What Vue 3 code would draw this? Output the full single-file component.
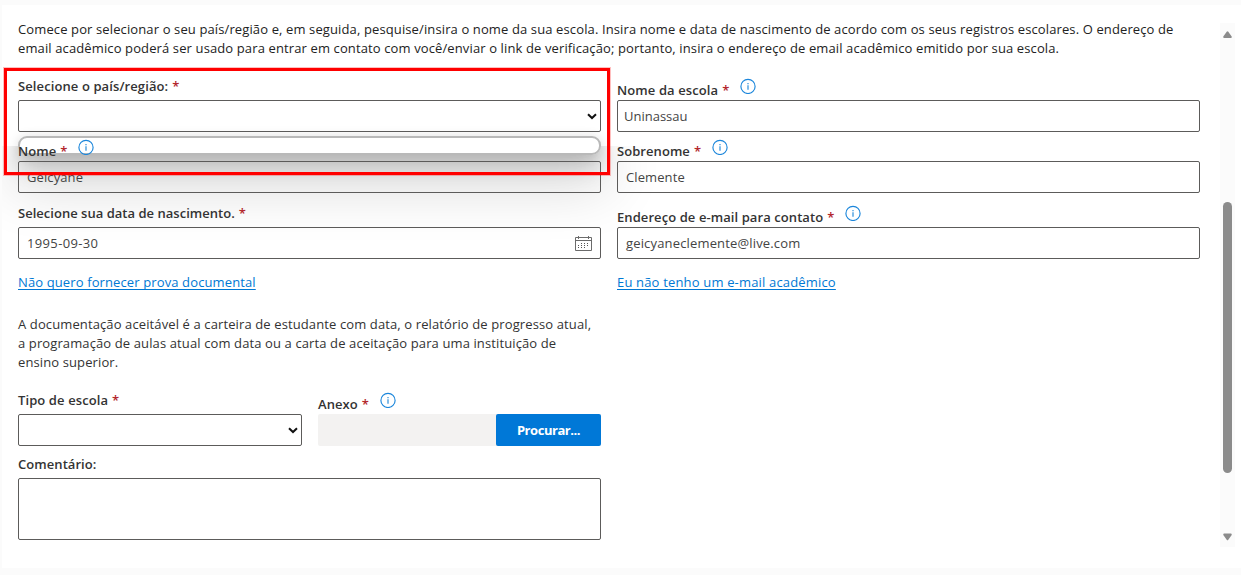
<script setup>
import { h } from 'vue'

const InfoIcon = () =>
  h('svg', { class: 'info', width: 16, height: 16, viewBox: '0 0 16 16' }, [
    h('circle', { cx: 8, cy: 8.4, r: 7.1, fill: 'none', stroke: '#1b86db', 'stroke-width': 1.15 }),
    h('path', { d: 'M7.5 5h1v1.2h-1zM7.5 7.2h1v4.600h-1z', fill: '#0078d4' }),
  ])

const Chevron = () =>
  h('svg', { width: 10, height: 7, viewBox: '0 0 10 7' }, [
    h('path', { d: 'M1 1.2l4 3.8 4-3.8', fill: 'none', stroke: '#111', 'stroke-width': 2 }),
  ])
</script>

<template>
  <div class="page">
    <main class="card">
      <div class="content">
        <p class="intro">
          <span class="i1">Comece por selecionar o seu país/região e, em seguida, pesquise/insira o nome da sua escola. Insira nome e data de nascimento de acordo com os seus registros escolares. O endereço de</span><br>
          <span class="i2">email acadêmico poderá ser usado para entrar em contato com você/enviar o link de verificação; portanto, insira o endereço de email acadêmico emitido por sua escola.</span>
        </p>

        <div class="row first">
          <div class="field country">
            <div class="label plain"><span class="t1">Selecione o país/região:</span><b>*</b></div>
            <div class="box select"><Chevron /></div>
            <div class="popup"></div>
            <div class="shade"><i></i></div>
            <div class="mark"></div>
          </div>
          <div class="field">
            <div class="label"><span class="t2">Nome da escola</span><b>*</b><InfoIcon /></div>
            <div class="box near"><span class="v1">Uninassau</span></div>
          </div>
        </div>

        <div class="row second">
          <div class="field">
            <div class="label"><span class="t3">Nome</span><b>*</b><InfoIcon /></div>
            <div class="box"><span class="v2">Geicyane</span></div>
          </div>
          <div class="field">
            <div class="label"><span class="t4">Sobrenome</span><b>*</b><InfoIcon /></div>
            <div class="box"><span class="v3">Clemente</span></div>
          </div>
        </div>

        <div class="row third">
          <div class="field">
            <div class="label plain"><span class="t5">Selecione sua data de nascimento.</span><b>*</b></div>
            <div class="box date">
              <span class="v4">1995-09-30</span>
              <svg width="17" height="16" viewBox="0 0 17 16">
                <path d="M.5 2.500h16v13h-16zM.5 5.500h16M3.500 1v3M13.500 1v3" fill="none" stroke="#6b6b6b" />
                <path d="M6 8.500h9M3 10.500h12M3 12.500h9" stroke="#555" stroke-width="1" stroke-dasharray="1 2" />
              </svg>
            </div>
          </div>
          <div class="field">
            <div class="label"><span class="t6">Endereço de e-mail para contato</span><b>*</b><InfoIcon /></div>
            <div class="box"><span class="v5">geicyaneclemente@live.com</span></div>
          </div>
        </div>

        <div class="row links">
          <div><a class="l1">Não quero fornecer prova documental</a></div>
          <div><a class="l2">Eu não tenho um e-mail acadêmico</a></div>
        </div>

        <p class="doc">
          <span class="d1">A documentação aceitável é a carteira de estudante com data, o relatório de progresso atual,</span><br>
          <span class="d2">a programação de aulas atual com data ou a carta de aceitação para uma instituição de</span><br>
          <span class="d3">ensino superior.</span>
        </p>

        <div class="row upload">
          <div class="field">
            <div class="label plain"><span class="t7">Tipo de escola</span><b>*</b></div>
            <div class="box select"><Chevron /></div>
          </div>
          <div class="field">
            <div class="label"><span class="t8">Anexo</span><b>*</b><InfoIcon /></div>
            <div class="file"><button><span>Procurar...</span></button></div>
          </div>
        </div>

        <div class="field comment">
          <div class="label plain"><span class="t9">Comentário:</span></div>
          <div class="box area"></div>
        </div>
      </div>

      <div class="scroll">
        <svg width="9" height="8" viewBox="0 0 9 8"><path d="M3.700.7q.8-1 1.600 0L8.700 5.500Q9 7 8 7H1Q0 7 .3 5.500z" fill="#8b8b8b" /></svg>
        <div class="thumb"></div>
        <svg width="9" height="8" viewBox="0 0 9 8"><path d="M3.700 6.800q.8 1 1.600 0L8.700 2Q9 .5 8 .5H1Q0 .5.300 2z" fill="#8b8b8b" /></svg>
      </div>
    </main>
  </div>
</template>

<style>
body { background: #fbfbfb; overflow: hidden; }
</style>

<style scoped>
* { box-sizing: border-box; }
.page { height: 575px; padding: 5px 0 7px 2px; background: #fbfbfb; font-family: "Open Sans", "Noto Sans", sans-serif; font-size: 13px; color: #333; overflow: hidden; }
.card { height: 563px; background: #fff; display: flex; padding-left: 16px; isolation: isolate; }
.content { width: 1182px; padding-top: 15px; }
p { margin: 0; line-height: 19px; white-space: nowrap; letter-spacing: .115px; }
.intro { height: 56px; color: #222; letter-spacing: .12px; }
.row { display: grid; grid-template-columns: 583px 583px; gap: 16px; }
.second { margin-top: 5px; }
.third { margin-top: 10px; }
.field { position: relative; }
.label { height: 24px; display: flex; align-items: flex-start; padding-top: 5px; line-height: 18px; font-weight: 600; white-space: nowrap; letter-spacing: .06px; }
.t1, .t2, .t7 { letter-spacing: .1px; }
.t5 { letter-spacing: .02px; }
.t6 { letter-spacing: .08px; }
.label.plain { padding-top: 1px; }
.label b { color: #b3262c; font-weight: 600; margin-left: 4px; width: 6px; }
:deep(.info), .label svg { margin: -3px 0 0 12px; flex: none; }
.box { height: 32px; border: 1px solid #5c5b5a; border-radius: 2px; display: flex; align-items: center; padding: 0 8px; color: #444; white-space: nowrap; }
.box.near { padding-left: 6px; }
.v5 { letter-spacing: .16px; }
.v4 { letter-spacing: .35px; }
.v2, .v3 { letter-spacing: .1px; }
.select { justify-content: flex-end; padding: 0 3px; }
.date { justify-content: space-between; }
.popup { position: absolute; z-index: -1; left: 0; top: 60px; width: 583px; height: 19px; border: 2px solid #b9b9b9; border-radius: 9px; background: #fff; box-shadow: 0 1px 12px rgba(0,0,0,.14); }
.shade { position: absolute; z-index: -2; left: -16px; top: 70px; width: 680px; height: 95px; overflow: hidden; }
.shade i { position: absolute; left: 16px; top: -9px; width: 583px; height: 18px; border-radius: 9px; box-shadow: 0 10px 22px 2px rgba(0,0,0,.2), 0 20px 56px 12px rgba(0,0,0,.16); }
.mark { position: absolute; z-index: 2; left: -14px; top: -8px; width: 606px; height: 107px; border: 3px solid #f00; box-shadow: 0 0 0 1px rgba(255,0,0,.25); }
.links { margin-top: 14px; height: 19px; line-height: 19px; }
.links a { color: #0078d4; text-decoration: underline; text-underline-offset: 2px; text-decoration-skip-ink: none; letter-spacing: .12px; }
.links .l2 { letter-spacing: .17px; }
.doc { margin-top: 23px; height: 57px; }
.upload { grid-template-columns: 284px 283px; margin-top: 18px; }
.file { height: 32px; background: #f3f2f1; display: flex; justify-content: flex-end; border-radius: 2px; }
button { width: 105px; height: 32px; border: 0; padding: 0; border-radius: 2px; background: #0078d7; color: #fff; font: 700 13px "Open Sans", sans-serif; letter-spacing: -.45px; }
.comment { width: 583px; margin-top: 8px; }
.area { height: 62px; }
.scroll { width: 15px; height: 524px; margin: 18px 0 0 20px; background: #fbfbfb; display: flex; flex-direction: column; align-items: center; justify-content: space-between; padding: 8px 0 6px; }
.thumb { width: 9px; height: 271px; border-radius: 5px; background: #8b8b8b; margin-top: 102px; }
</style>
